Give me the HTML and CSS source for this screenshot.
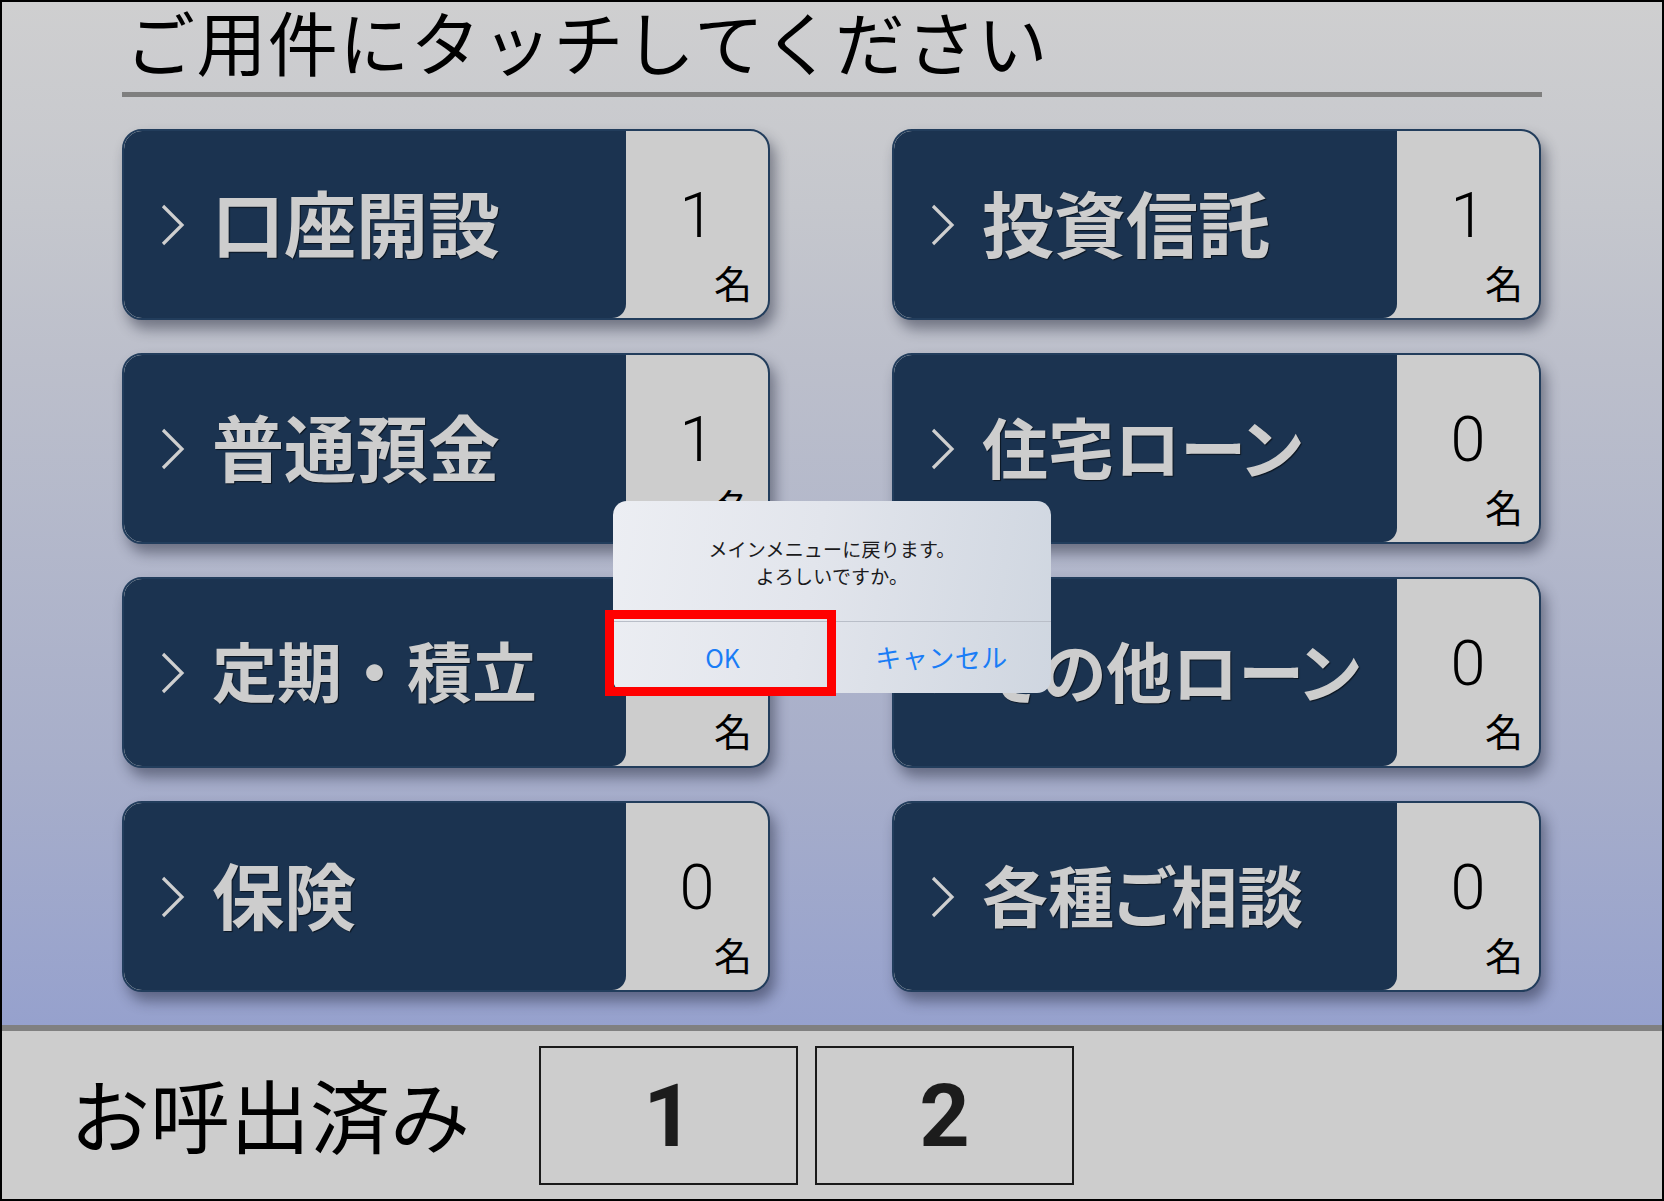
FILE: index.html
```html
<!DOCTYPE html>
<html lang="ja">
<head>
<meta charset="utf-8">
<title>受付</title>
<link rel="stylesheet" href="styles.css">
</head>
<body>
<div class="screen">
  <main class="menu">
    <header class="menu-head">
      <h1 class="title">ご用件にタッチしてください</h1>
      <div class="rule"></div>
    </header>
    <div class="grid">
      <div class="card">
        <div class="label"><svg class="chev" viewBox="0 0 26 42"><polyline points="3,2 22,21 3,40"/></svg><span class="label-text">口座開設</span></div>
        <div class="count"><span class="num">1</span><span class="unit">名</span></div>
      </div>
      <div class="card">
        <div class="label"><svg class="chev" viewBox="0 0 26 42"><polyline points="3,2 22,21 3,40"/></svg><span class="label-text">投資信託</span></div>
        <div class="count"><span class="num">1</span><span class="unit">名</span></div>
      </div>
      <div class="card">
        <div class="label"><svg class="chev" viewBox="0 0 26 42"><polyline points="3,2 22,21 3,40"/></svg><span class="label-text">普通預金</span></div>
        <div class="count"><span class="num">1</span><span class="unit">名</span></div>
      </div>
      <div class="card">
        <div class="label"><svg class="chev" viewBox="0 0 26 42"><polyline points="3,2 22,21 3,40"/></svg><span class="label-text label-text--kana">住宅ローン</span></div>
        <div class="count"><span class="num">0</span><span class="unit">名</span></div>
      </div>
      <div class="card">
        <div class="label"><svg class="chev" viewBox="0 0 26 42"><polyline points="3,2 22,21 3,40"/></svg><span class="label-text label-text--dot">定期・積立</span></div>
        <div class="count"><span class="num">1</span><span class="unit">名</span></div>
      </div>
      <div class="card">
        <div class="label"><svg class="chev" viewBox="0 0 26 42"><polyline points="3,2 22,21 3,40"/></svg><span class="label-text label-text--kana">その他ローン</span></div>
        <div class="count"><span class="num">0</span><span class="unit">名</span></div>
      </div>
      <div class="card">
        <div class="label"><svg class="chev" viewBox="0 0 26 42"><polyline points="3,2 22,21 3,40"/></svg><span class="label-text">保険</span></div>
        <div class="count"><span class="num">0</span><span class="unit">名</span></div>
      </div>
      <div class="card">
        <div class="label"><svg class="chev" viewBox="0 0 26 42"><polyline points="3,2 22,21 3,40"/></svg><span class="label-text label-text--kana">各種ご相談</span></div>
        <div class="count"><span class="num">0</span><span class="unit">名</span></div>
      </div>
    </div>
  </main>
  <footer class="called">
    <span class="called-label">お呼出済み</span>
    <div class="called-box">1</div>
    <div class="called-box">2</div>
  </footer>

  <div class="dialog">
    <div class="dialog-msg">
      <p>メインメニューに戻ります。</p>
      <p>よろしいですか。</p>
    </div>
    <div class="dialog-actions">
      <span class="dialog-btn">OK</span>
      <span class="dialog-btn dialog-btn--cancel">キャンセル</span>
    </div>
  </div>
  <div class="highlight"></div>
</div>
</body>
</html>
```

FILE: styles.css
```css
* { box-sizing: border-box; }
html, body { margin: 0; padding: 0; }
body {
  width: 1664px;
  height: 1201px;
  overflow: hidden;
  font-family: "Noto Sans CJK JP", "Noto Sans", sans-serif;
  background: #000;
}
.screen {
  position: relative;
  width: 1664px;
  height: 1201px;
  border: 2px solid #000;
  background: #cdcdcd;
  display: flex;
  flex-direction: column;
}
.menu {
  height: 1023px;
  padding-left: 120px;
  background: linear-gradient(180deg, #cfcfd0 0%, #c5c7cd 20%, #bcbfcb 35%, #a7aeca 75%, #96a1cd 100%);
}
.menu-head { padding-top: 1px; }
.title {
  margin: 0 0 13px 3px;
  font-size: 70px;
  line-height: 76px;
  font-weight: 400;
  color: #000;
  letter-spacing: 1.4px;
  white-space: nowrap;
}
.rule {
  width: 1420px;
  height: 5px;
  background: #7f7f7f;
}
.grid {
  margin-top: 32px;
  display: grid;
  grid-template-columns: 648px 649px;
  grid-auto-rows: 191px;
  column-gap: 122px;
  row-gap: 33px;
}
.card {
  display: flex;
  border: 2px solid #223d5c;
  border-radius: 20px;
  background: #cdcdcd;
  box-shadow: 5px 9px 14px rgba(20, 25, 45, 0.45);
  overflow: hidden;
}
.label {
  flex: 1;
  display: flex;
  align-items: center;
  background: #1b3350;
  border-radius: 18px 0 14px 18px;
  padding-left: 36px;
}
.chev {
  width: 26px;
  height: 42px;
  margin-right: 26px;
  fill: none;
  stroke: #cfcfcf;
  stroke-width: 3.2;
}
.label-text {
  color: #cdcdcd;
  font-weight: 700;
  font-size: 72px;
  line-height: 72px;
  margin-bottom: 8px;
  text-shadow: 1px 1px 1px rgba(0, 0, 0, 0.6);
  white-space: nowrap;
}
.label-text--kana {
  font-size: 66px;
  font-feature-settings: "palt";
}
.label-text--dot {
  font-size: 65px;
}
.count {
  width: 142px;
  display: flex;
  flex-direction: column;
  align-items: center;
  padding-top: 53px;
  color: #000;
}
.num {
  font-family: Roboto, "Liberation Sans", sans-serif;
  font-weight: 300;
  font-size: 63px;
  line-height: 63px;
}
.unit {
  align-self: flex-end;
  margin-top: 16px;
  margin-right: 16px;
  font-size: 38px;
  line-height: 38px;
}
.called {
  flex: 1;
  display: flex;
  align-items: center;
  border-top: 6px solid #808080;
  background: #cdcdcd;
  padding: 15px 0 14px 68px;
}
.called-label {
  width: 469px;
  font-size: 80px;
  line-height: 80px;
  margin-bottom: 8px;
  color: #000;
  white-space: nowrap;
}
.called-box {
  width: 259px;
  height: 139px;
  border: 2px solid #1a1a1a;
  margin-right: 17px;
  display: flex;
  align-items: center;
  justify-content: center;
  font-family: Roboto, "Liberation Sans", sans-serif;
  font-weight: 700;
  font-size: 88px;
  color: #1c1c1c;
}
.dialog {
  position: absolute;
  left: 611px;
  top: 499px;
  width: 438px;
  height: 192px;
  border-radius: 14px;
  background: linear-gradient(100deg, #eceef3 0%, #e2e5ec 45%, #cfd6e0 100%);
  display: flex;
  flex-direction: column;
}
.dialog-msg {
  height: 121px;
  padding-top: 34px;
  border-bottom: 1px solid #b9bec8;
  text-align: center;
  color: #1a1a1c;
  font-size: 19px;
  line-height: 27px;
  letter-spacing: 0.2px;
}
.dialog-msg p { margin: 0; }
.dialog-actions {
  flex: 1;
  display: flex;
}
.dialog-btn {
  flex: 1;
  display: flex;
  align-items: center;
  justify-content: center;
  color: #1a7df6;
  font-size: 25px;
  padding-bottom: 2px;
}
.dialog-btn--cancel {
  font-size: 26px;
  letter-spacing: 0.5px;
}
.highlight {
  position: absolute;
  left: 603px;
  top: 608px;
  width: 231px;
  height: 86px;
  border: 9px solid #ff0000;
}
```
